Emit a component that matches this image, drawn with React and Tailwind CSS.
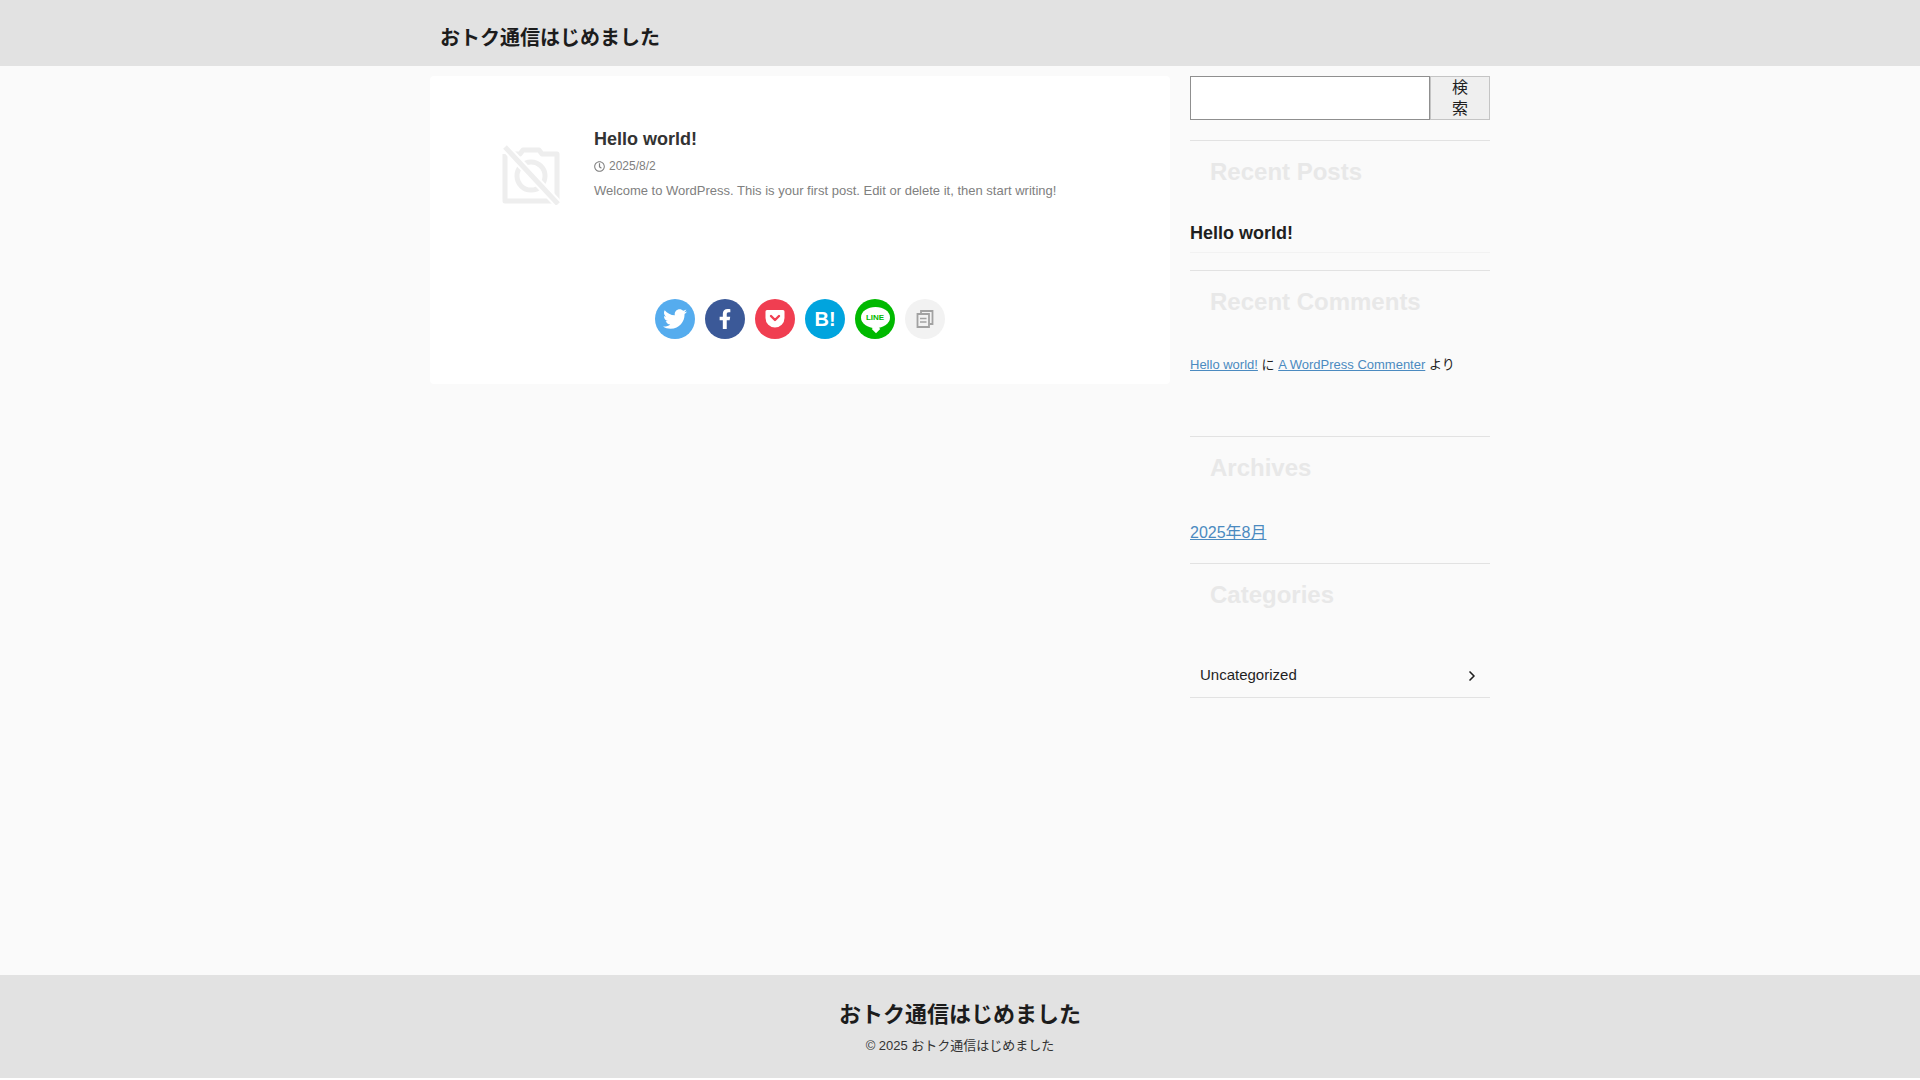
import React from 'react';
import { FaTwitter, FaFacebookF, FaRegClock } from 'react-icons/fa';
import { ChevronRight } from 'lucide-react';

const font = '[font-family:"Liberation_Sans","Noto_Sans_CJK_JP",sans-serif]';

const NoImage = () => (
  <svg viewBox="0 0 58 60" className="w-[58px] h-[60px]" fill="none" stroke="#eeeeee">
    <path d="M12 9H18L21 5H37L40 9H55V56H3V9" strokeWidth="5" strokeLinejoin="round" />
    <circle cx="29" cy="31" r="14" strokeWidth="5" />
    <path d="M3 2L56 59" stroke="#ffffff" strokeWidth="9" />
    <path d="M3 2L56 59" strokeWidth="5" />
  </svg>
);

const PocketIcon = () => (
  <svg viewBox="0 0 20 20" className="w-[20px] h-[20px]">
    <path d="M2 1H18A1.5 1.5 0 0 1 19.5 2.5V9A9.5 9.5 0 0 1 .5 9V2.500A1.500 1.500 0 0 1 2 1Z" fill="#ffffff" />
    <path d="M6 7L10 11L14 7" fill="none" stroke="#f03e51" strokeWidth="2.400" strokeLinecap="round" strokeLinejoin="round" />
  </svg>
);

const CopyIcon = () => (
  <svg viewBox="0 0 18 18" className="w-[18px] h-[18px]" fill="none" stroke="#a2a2a2" strokeWidth="1.800">
    <path d="M5 3.500V1H16.500V14H13.500" />
    <path d="M1.500 4H13V17H1.500Z" fill="#f2f2f2" />
    <path d="M4 8.500H10.500M4 12H10.500" strokeWidth="1.500" />
  </svg>
);

const ShareButton = ({ color, children }) => (
  <a className={`w-10 h-10 rounded-full flex items-center justify-center ${color}`}>{children}</a>
);

const SectionTitle = ({ children }) => (
  <h3 className="pl-5 text-2xl leading-[30px] font-bold text-[#e8e8e8]">{children}</h3>
);

export default function App() {
  return (
    <div className={`${font} bg-[#fafafa] text-[#1f1f1f] text-base`}>
      <header className="h-[66px] bg-[#e2e2e2]">
        <div className="w-[1060px] mx-auto pl-2.5 pt-6 text-[20px] leading-[28px] font-bold text-[#1c1c1c]">おトク通信はじめました</div>
      </header>

      <main className="h-[909px] w-[1060px] mx-auto flex gap-5 pt-2.5">
        <article className="w-[740px] h-[308px] bg-white rounded-[4px] px-[72px] pt-[50px]">
          <div className="flex">
            <div className="w-[92px] pt-[19px]"><NoImage /></div>
            <div>
              <h2 className="text-[18px] leading-[26px] font-bold text-[#333333]">Hello world!</h2>
              <div className="mt-[5px] flex items-center gap-[4px] text-[12px] leading-[18px] text-[#808080]">
                <FaRegClock className="w-[11px] h-[11px]" />
                <span>2025/8/2</span>
              </div>
              <p className="mt-[6px] text-[13px] leading-[20px] text-[#808080]">Welcome to WordPress. This is your first post. Edit or delete it, then start writing!</p>
            </div>
          </div>
          <div className="mt-[94px] flex justify-center gap-[10px]">
            <ShareButton color="bg-[#55acee]"><FaTwitter className="w-[24px] h-[24px] text-white" /></ShareButton>
            <ShareButton color="bg-[#3b5998]"><FaFacebookF className="w-[20px] h-[20px] text-white" /></ShareButton>
            <ShareButton color="bg-[#f03e51]"><PocketIcon /></ShareButton>
            <ShareButton color="bg-[#00a4de]"><span className="text-[20px] leading-none font-bold text-white">B!</span></ShareButton>
            <ShareButton color="bg-[#00b900]">
              <span className="relative flex w-[29px] h-[21px] mb-[3px] items-center justify-center rounded-[50%] bg-white text-[8px] leading-none font-bold text-[#00b900]">
                LINE
                <span className="absolute -bottom-[4px] left-[12px] w-[6px] h-[6px] rotate-45 bg-white" />
              </span>
            </ShareButton>
            <ShareButton color="bg-[#f2f2f2]"><CopyIcon /></ShareButton>
          </div>
        </article>

        <aside className="w-[300px]">
          <form className="flex h-[44px]">
            <input className="w-[240px] h-full bg-white border-2 border-t-[#8f8f8f] border-l-[#8f8f8f] border-r-[#8f8f8f] border-b-[#8f8f8f] border-[1px]" />
            <button type="button" className="w-[60px] h-full bg-[#efefef] border border-[#c4c4c4] text-[16px] leading-[21px] px-5">検索</button>
          </form>

          <section className="mt-[20px] border-t border-[#e2e2e2] h-[130px]">
            <div className="pt-[16px]"><SectionTitle>Recent Posts</SectionTitle></div>
            <div className="mt-[33px] border-b border-[#f2f2f2] h-[33px] text-[18px] leading-[26px] font-bold text-[#1f1f1f]">Hello world!</div>
          </section>

          <section className="border-t border-[#e2e2e2] h-[166px]">
            <div className="pt-[16px]"><SectionTitle>Recent Comments</SectionTitle></div>
            <p className="mt-[38px] text-[13px] leading-[20px]">
              <a className="underline text-[#4b8ac0]">Hello world!</a> に <a className="underline text-[#4b8ac0]">A WordPress Commenter</a> より
            </p>
          </section>

          <section className="border-t border-[#e2e2e2] h-[127px]">
            <div className="pt-[16px]"><SectionTitle>Archives</SectionTitle></div>
            <a className="block mt-[38px] underline text-[#4b8ac0] text-[16px] leading-[24px]">2025年8月</a>
          </section>

          <section className="border-t border-[#e2e2e2]">
            <div className="pt-[16px]"><SectionTitle>Categories</SectionTitle></div>
            <div className="mt-[44px] h-[44px] pl-[10px] pr-[10px] flex items-center justify-between border-b border-[#e2e2e2] text-[15px]">
              <span>Uncategorized</span>
              <ChevronRight className="w-[16px] h-[16px]" strokeWidth={2.5} />
            </div>
          </section>
        </aside>
      </main>

      <footer className="h-[103px] bg-[#e2e2e2] text-center pt-[24px]">
        <div className="text-[22px] leading-[32px] font-bold text-[#1c1c1c]">おトク通信はじめました</div>
        <div className="mt-[5px] text-[13px] leading-[20px] text-[#333333]">© 2025 おトク通信はじめました</div>
      </footer>
      <div className="h-[2px] bg-white" />
    </div>
  );
}
